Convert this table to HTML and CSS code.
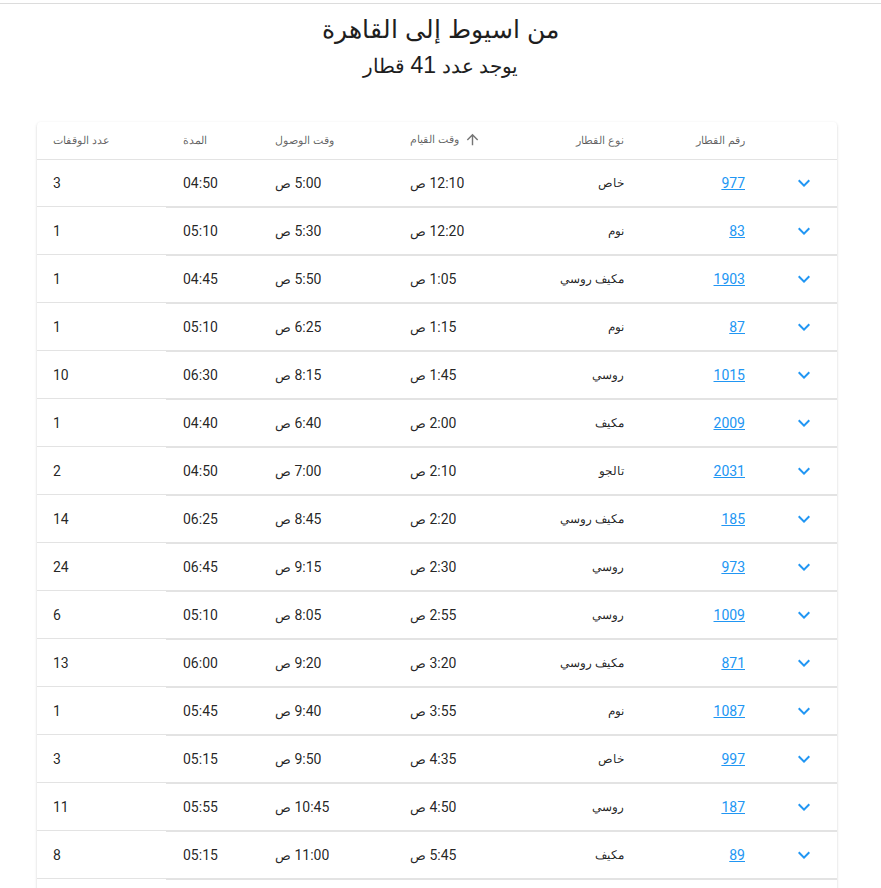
FILE: index.html
```html
<!DOCTYPE html>
<html lang="ar" dir="rtl">
<head>
<meta charset="utf-8">
<title>من اسيوط إلى القاهرة</title>
<link rel="stylesheet" href="styles.css">
</head>
<body>
<div class="topbar"></div>
<header class="heading">
  <h1 class="title">من اسيوط إلى القاهرة</h1>
  <p class="subtitle">يوجد عدد <span class="count">41</span> قطار</p>
</header>
<main class="wrap">
  <div class="card">
    <div class="row head">
      <div class="c c0"></div>
      <div class="c c1">رقم القطار</div>
      <div class="c c2">نوع القطار</div>
      <div class="c c3"><span class="sort"><svg viewBox="0 0 24 24" width="17" height="17"><path d="M4 12l1.41 1.41L11 7.83V20h2V7.83l5.58 5.59L20 12l-8-8-8 8z" fill="#757575"/></svg><span>وقت القيام</span></span></div>
      <div class="c c4">وقت الوصول</div>
      <div class="c c5">المدة</div>
      <div class="c c6">عدد الوقفات</div>
    </div>
    <div id="rows"></div>
  </div>
</main>
<script src="app.js"></script>
</body>
</html>
```

FILE: app.js
```js
const data = [
  ["977","خاص","12:10","5:00","04:50","3"],
  ["83","نوم","12:20","5:30","05:10","1"],
  ["1903","مكيف روسي","1:05","5:50","04:45","1"],
  ["87","نوم","1:15","6:25","05:10","1"],
  ["1015","روسي","1:45","8:15","06:30","10"],
  ["2009","مكيف","2:00","6:40","04:40","1"],
  ["2031","تالجو","2:10","7:00","04:50","2"],
  ["185","مكيف روسي","2:20","8:45","06:25","14"],
  ["973","روسي","2:30","9:15","06:45","24"],
  ["1009","روسي","2:55","8:05","05:10","6"],
  ["871","مكيف روسي","3:20","9:20","06:00","13"],
  ["1087","نوم","3:55","9:40","05:45","1"],
  ["997","خاص","4:35","9:50","05:15","3"],
  ["187","روسي","4:50","10:45","05:55","11"],
  ["89","مكيف","5:45","11:00","05:15","8"],
  ["2007","روسي","6:10","12:30","06:20","12"],
  ["935","مكيف","7:25","1:30","06:05","9"]
];
const chevron = '<svg class="chev" viewBox="0 0 24 24" width="24" height="24"><path d="M7.41 8.59L12 13.17l4.59-4.58L18 10l-6 6-6-6 1.41-1.41z" fill="#2196f3"/></svg>';
const time = t => t + ' <span class="ar">ص</span>';
const host = document.getElementById("rows");
host.innerHTML = data.map(r =>
  '<div class="row body">' +
  '<div class="c c0">' + chevron + '</div>' +
  '<div class="c c1"><a href="#" class="num">' + r[0] + '</a></div>' +
  '<div class="c c2">' + r[1] + '</div>' +
  '<div class="c c3">' + time(r[2]) + '</div>' +
  '<div class="c c4">' + time(r[3]) + '</div>' +
  '<div class="c c5">' + r[4] + '</div>' +
  '<div class="c c6">' + r[5] + '</div>' +
  '</div><div class="detail"></div>'
).join("");
```

FILE: styles.css
```css
* { box-sizing: border-box; }
html, body { margin: 0; padding: 0; background: #fff; }
body {
  font-family: Roboto, sans-serif;
  color: rgba(0,0,0,.87);
  overflow: hidden;
}
.topbar {
  height: 4px;
  border-bottom: 1px solid #dcdcdc;
}
.heading {
  text-align: center;
  padding-top: 8px;
  font-family: "Liberation Sans", Arial, sans-serif;
  color: #1e1e1e;
}
.title {
  margin: 0;
  font-size: 25px;
  font-weight: 400;
  line-height: 34px;
}
.subtitle {
  margin: 4px 0 0;
  font-size: 20px;
  line-height: 30px;
}
.count { font-size: 23px; }
.wrap {
  padding-top: 41px;
  direction: ltr;
  padding-left: 37px;
}
.card {
  direction: rtl;
  width: 800px;
  background: #fff;
  border-radius: 4px;
  box-shadow: 0 1px 3px rgba(0,0,0,.16), 0 1px 1px rgba(0,0,0,.08);
}
.row {
  display: grid;
  grid-template-columns: 92px 121px 139px 75px 135px 109px 129px;
  align-items: center;
  border-bottom: 1px solid #e3e3e3;
}
.row.head {
  height: 38px;
  font-size: 11px;
  color: rgba(0,0,0,.62);
}
.row.body {
  height: 47px;
  font-size: 14px;
}
.detail {
  height: 1px;
  margin-left: 129px;
  background: #e3e3e3;
}
.c { white-space: nowrap; }
.c0 { display: flex; justify-content: flex-start; padding-right: 21px; }
.c1, .c2 { text-align: right; }
.row.body .c2 { font-size: 12px; }
.ar { font-size: 13px; }
.c3, .c4 { text-align: left; }
.c5 { text-align: left; padding-left: 17px; }
.c6 { text-align: left; padding-left: 16px; }
.chev { display: block; }
.num {
  color: #2196f3;
  text-decoration: underline;
}
.sort {
  display: inline-flex;
  align-items: center;
  gap: 5px;
}
.sort svg { display: block; }
```
